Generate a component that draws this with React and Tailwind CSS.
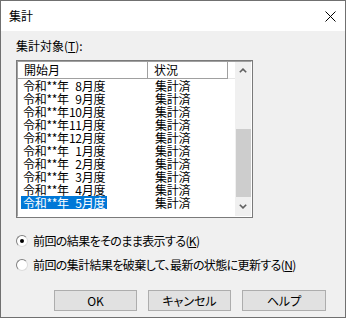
export default function App() {
  const rows = ['8', '9', '10', '11', '12', '1', '2', '3', '4', '5'];
  return (
    <div className="w-[346px] h-[318px] border border-[#707070] bg-[#f0f0f0] flex flex-col font-['Noto_Sans_CJK_JP',sans-serif] text-[12px] text-black [font-feature-settings:'palt'] overflow-hidden">
      <div className="h-[30px] shrink-0 bg-white flex items-center justify-between pl-[8px] pr-[9px]">
        <span className="leading-[16px]">集計</span>
        <svg width="11" height="11" viewBox="0 0 11 11">
          <path d="M0.5 0.5L10.5 10.5M10.5 0.5L0.5 10.5" stroke="#000" strokeWidth="1" />
        </svg>
      </div>
      <div className="flex-1 flex flex-col px-[15px]">
        <div className="h-[29px] shrink-0 pt-[7px] leading-[16px]">
          集計対象(<span className="underline">T</span>):
        </div>
        <div className="w-[237px] h-[158px] shrink-0 border border-[#7a7a7a]">
          <div className="w-full h-full border border-t-[#a0a0a0] border-l-[#a0a0a0] border-r-white border-b-white bg-white flex">
            <div className="flex-1 flex flex-col">
              <div className="h-[17px] shrink-0 flex leading-[16px]">
                <div className="w-[130px] border-r border-b border-[#a0a0a0] pl-[6px]">開始月</div>
                <div className="w-[80px] border-r border-b border-[#a0a0a0] pl-[6px]">状況</div>
                <div className="flex-1 border-b border-[#e5e5e5]"></div>
              </div>
              {rows.map((m, i) => {
                const sel = i === rows.length - 1;
                return (
                  <div key={m} className="h-[13px] flex leading-[13px] tracking-[-0.3px]">
                    <div className="w-[130px] pl-[3px]">
                      <span className={sel ? 'inline-block px-[2px] bg-[#0078d7] text-white' : 'inline-block px-[2px]'}>
                        令和**年<span className="inline-block w-[13px] text-right">{m}</span>月度
                      </span>
                    </div>
                    <div className="pl-[7px]">集計済</div>
                  </div>
                );
              })}
            </div>
            <div className="w-[16px] shrink-0 bg-[#f0f0f0] flex flex-col">
              <div className="h-[17px] shrink-0 flex items-center justify-center">
                <svg width="8" height="5" viewBox="0 0 8 5">
                  <path d="M0.8 4.3L4 1.1L7.2 4.3" stroke="#606060" strokeWidth="1.6" fill="none" />
                </svg>
              </div>
              <div className="h-[50px] shrink-0"></div>
              <div className="h-[68px] shrink-0 ml-[1px] bg-[#cdcdcd]"></div>
              <div className="flex-1 flex items-center justify-center">
                <svg width="8" height="5" viewBox="0 0 8 5">
                  <path d="M0.8 0.7L4 3.9L7.2 0.7" stroke="#606060" strokeWidth="1.6" fill="none" />
                </svg>
              </div>
            </div>
          </div>
        </div>
        <div className="mt-[15px] h-[16px] flex items-center leading-[16px]">
          <span className="w-[12px] h-[12px] shrink-0 rounded-full bg-white border border-t-[#808080] border-l-[#808080] border-r-[#dcdcdc] border-b-[#dcdcdc] flex items-center justify-center">
            <span className="w-[4px] h-[4px] rounded-full bg-black"></span>
          </span>
          <span className="ml-[5px] tracking-[-0.6px]">前回の結果をそのまま表示する(<span className="underline">K</span>)</span>
        </div>
        <div className="mt-[8px] h-[16px] flex items-center leading-[16px]">
          <span className="w-[12px] h-[12px] shrink-0 rounded-full bg-white border border-t-[#808080] border-l-[#808080] border-r-[#dcdcdc] border-b-[#dcdcdc]"></span>
          <span className="ml-[5px] tracking-[-0.6px]">前回の集計結果を破棄して、最新の状態に更新する(<span className="underline">N</span>)</span>
        </div>
        <div className="mt-[17px] flex pl-[38px] gap-[11px]">
          <button className="w-[83px] h-[21px] bg-[#e1e1e1] border border-[#adadad] leading-[19px]">OK</button>
          <button className="w-[83px] h-[21px] bg-[#e1e1e1] border border-[#adadad] leading-[19px]">キャンセル</button>
          <button className="w-[84px] h-[21px] bg-[#e1e1e1] border border-[#adadad] leading-[19px]">ヘルプ</button>
        </div>
      </div>
    </div>
  );
}
